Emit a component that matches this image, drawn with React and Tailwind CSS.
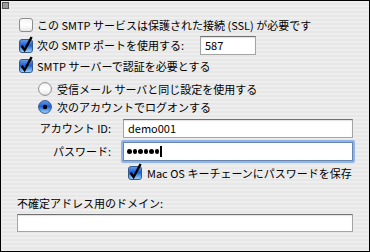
import React from 'react';

function AquaCheck({ checked }) {
    return (
        <svg width="14" height="14" viewBox="0 0 14 14" className="shrink-0 overflow-visible">
            <defs>
                <linearGradient id="cbOn" x1="0" y1="0" x2="0" y2="1">
                    <stop offset="0" stopColor="#6f9fe6" />
                    <stop offset="0.45" stopColor="#1d5fd0" />
                    <stop offset="0.55" stopColor="#3077dc" />
                    <stop offset="1" stopColor="#aad8fc" />
                </linearGradient>
                <linearGradient id="cbOff" x1="0" y1="0" x2="0" y2="1">
                    <stop offset="0" stopColor="#f4f4f4" />
                    <stop offset="0.5" stopColor="#ffffff" />
                    <stop offset="1" stopColor="#e6e6e6" />
                </linearGradient>
            </defs>
            <rect x="0.5" y="0.5" width="13" height="13" rx="2.5"
                fill={checked ? 'url(#cbOn)' : 'url(#cbOff)'}
                stroke={checked ? '#34598f' : '#8c8c8c'} />
            {checked && (
                <path d="M2.6 6.8 L5.6 11 L12.6 -2" stroke="#000" strokeWidth="2.4"
                    fill="none" strokeLinejoin="miter" />
            )}
        </svg>
    );
}

function AquaRadio({ checked }) {
    return (
        <svg width="14" height="14" viewBox="0 0 14 14" className="shrink-0">
            <defs>
                <linearGradient id="rbOn" x1="0" y1="0" x2="0" y2="1">
                    <stop offset="0" stopColor="#6f9fe6" />
                    <stop offset="0.45" stopColor="#1d5fd0" />
                    <stop offset="0.55" stopColor="#3077dc" />
                    <stop offset="1" stopColor="#aad8fc" />
                </linearGradient>
                <linearGradient id="rbOff" x1="0" y1="0" x2="0" y2="1">
                    <stop offset="0" stopColor="#f2f2f2" />
                    <stop offset="0.5" stopColor="#ffffff" />
                    <stop offset="1" stopColor="#e4e4e4" />
                </linearGradient>
            </defs>
            <circle cx="7" cy="7" r="6.4" fill={checked ? 'url(#rbOn)' : 'url(#rbOff)'}
                stroke={checked ? '#34598f' : '#8c8c8c'} strokeWidth="1" />
            {checked && <circle cx="7" cy="7" r="2.2" fill="#000" />}
        </svg>
    );
}

const field = 'bg-white border border-[#a4a4a4] border-t-[#707070] shadow-[inset_0_1px_1px_rgba(0,0,0,0.12)]';

export default function App() {
    return (
        <div className="w-[370px] h-[252px] border border-black text-black text-[11px] leading-none font-['Noto_Sans_CJK_JP',sans-serif] bg-[repeating-linear-gradient(180deg,#eeeeee_0px,#eeeeee_2px,#e7e7e7_2px,#e7e7e7_4px)]">
            {/* corner box */}
            <div className="h-[14px] pt-[1px] pl-[1px]">
                <div className="w-[7px] h-[7px] border border-[#555] bg-[#9c9c9c]" />
            </div>

            {/* SSL */}
            <div className="h-[20px] flex items-center pl-[18px] gap-[4px]">
                <AquaCheck checked={false} />
                <span>この SMTP サービスは保護された接続 (SSL) が必要です</span>
            </div>

            {/* port */}
            <div className="h-[21px] flex items-center pl-[18px] gap-[4px]">
                <AquaCheck checked />
                <span className="w-[159px]">次の SMTP ポートを使用する:</span>
                <div className={`${field} w-[56px] h-[19px] flex items-center pl-[4px]`}>587</div>
            </div>

            {/* auth */}
            <div className="h-[20px] flex items-center pl-[18px] gap-[4px]">
                <AquaCheck checked />
                <span>SMTP サーバーで認証を必要とする</span>
            </div>

            <div className="h-[4px]" />
            <div className="h-[18px] flex items-center pl-[37px] gap-[5px]">
                <AquaRadio checked={false} />
                <span>受信メール サーバと同じ設定を使用する</span>
            </div>
            <div className="h-[18px] flex items-center pl-[37px] gap-[5px]">
                <AquaRadio checked />
                <span>次のアカウントでログオンする</span>
            </div>

            {/* account */}
            <div className="h-[3px]" />
            <div className="h-[19px] flex items-center">
                <span className="w-[110px] text-right">アカウント ID:</span>
                <div className={`${field} ml-[12px] w-[230px] h-[19px] flex items-center pl-[4px]`}>demo001</div>
            </div>

            <div className="h-[4px]" />
            <div className="h-[19px] flex items-center">
                <span className="w-[110px] text-right">パスワード:</span>
                <div className="ml-[10px] w-[234px] h-[23px] rounded-[2px] bg-[#8eb6e8] p-[2px]">
                    <div className="w-full h-full bg-white border border-[#6a85ad] flex items-center pl-[3px] gap-[1px]">
                        <span className="w-[4.5px] h-[4.5px] rounded-full bg-black" />
                        <span className="w-[4.5px] h-[4.5px] rounded-full bg-black" />
                        <span className="w-[4.5px] h-[4.5px] rounded-full bg-black" />
                        <span className="w-[4.5px] h-[4.5px] rounded-full bg-black" />
                        <span className="w-[4.5px] h-[4.5px] rounded-full bg-black" />
                        <span className="w-[4.5px] h-[4.5px] rounded-full bg-black" />
                        <span className="w-[2px] h-[11px] bg-black" />
                    </div>
                </div>
            </div>

            {/* keychain */}
            <div className="h-[2px]" />
            <div className="h-[20px] flex items-center pl-[127px] gap-[5px]">
                <AquaCheck checked />
                <span>Mac OS キーチェーンにパスワードを保存</span>
            </div>

            {/* domain */}
            <div className="h-[11px]" />
            <div className="h-[18px] flex items-center pl-[16px]">
                <span>不確定アドレス用のドメイン:</span>
            </div>
            <div className={`${field} mt-[2px] ml-[16px] w-[336px] h-[18px]`} />
        </div>
    );
}
